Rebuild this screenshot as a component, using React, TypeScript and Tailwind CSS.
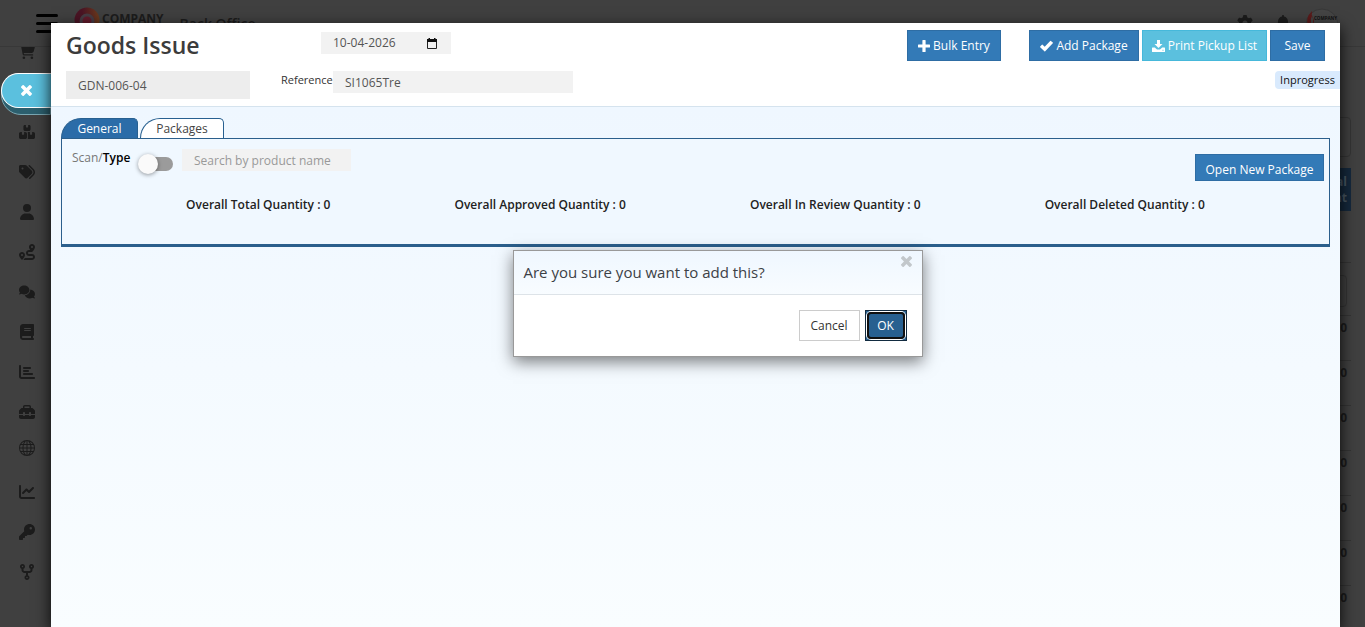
import React from "react";
import {
  FaCartShopping,
  FaBoxesStacked,
  FaTags,
  FaUser,
  FaRoute,
  FaComments,
  FaBook,
  FaChartBar,
  FaToolbox,
  FaChartLine,
  FaKey,
  FaCodeFork,
  FaGear,
  FaBell,
} from "react-icons/fa6";
import { BsGlobe } from "react-icons/bs";
import type { IconType } from "react-icons";

const navItems: { label: string; Icon: IconType }[] = [
  { label: "Sales", Icon: FaCartShopping },
  { label: "Orders", Icon: FaCartShopping },
  { label: "Inventory", Icon: FaBoxesStacked },
  { label: "Pricing", Icon: FaTags },
  { label: "Customers", Icon: FaUser },
  { label: "Routes", Icon: FaRoute },
  { label: "Messages", Icon: FaComments },
  { label: "Ledger", Icon: FaBook },
  { label: "Reports", Icon: FaChartBar },
  { label: "Tools", Icon: FaToolbox },
  { label: "Web", Icon: BsGlobe },
  { label: "Analytics", Icon: FaChartLine },
  { label: "Access", Icon: FaKey },
  { label: "Workflow", Icon: FaCodeFork },
];

const totals = [
  "Overall Total Quantity : 0",
  "Overall Approved Quantity : 0",
  "Overall In Review Quantity : 0",
  "Overall Deleted Quantity : 0",
];

const CrossIcon = ({ className }: { className: string }) => (
  <svg viewBox="110 366 1188 1188" className={className} fill="currentColor" aria-hidden="true">
    <path d="M1298 1322q0 40-28 68l-136 136q-28 28-68 28t-68-28l-294-294-294 294q-28 28-68 28t-68-28l-136-136q-28-28-28-68t28-68l294-294-294-294q-28-28-28-68t28-68l136-136q28-28 68-28t68 28l294 294 294-294q28-28 68-28t68 28l136 136q28 28 28 68t-28 68l-294 294 294 294q28 28 28 68z" />
  </svg>
);

const PlusIcon = () => (
  <svg viewBox="0 0 12 12" className="size-3" fill="currentColor" aria-hidden="true">
    <path d="M4.9 0h2.2q.5 0 .5.5v3.9h3.9q.5 0 .5.5v2.2q0 .5-.5.5H7.600v3.900q0 .5-.5.5H4.900q-.5 0-.5-.5V7.600H.5q-.5 0-.5-.5V4.900q0-.5.5-.5h3.900V.5q0-.5.5-.5z" />
  </svg>
);

const CheckIcon = () => (
  <svg viewBox="0 0 13 12" className="h-3 w-[13px]" fill="currentColor" aria-hidden="true">
    <path d="M.2 6.600 1.900 4.700q.3-.3.700 0L4.700 6.700 10.200 .9q.3-.3.700 0l1.900 1.600q.3.3 0 .7L5.200 11.300q-.4.4-.8 0L.2 7.300q-.3-.3 0-.7z" />
  </svg>
);

const DownloadIcon = () => (
  <svg viewBox="0 0 13 12" className="h-3 w-[13px]" fill="currentColor" aria-hidden="true">
    <path d="M5 0h3v4h2.500L6.500 8 2.500 4H5z" />
    <path fillRule="evenodd" d="M.5 7.500h2.300L5 9.500h3l2.200-2h2.300q.5 0 .5.5v3.500q0 .5-.5.5H.5q-.5 0-.5-.5V8q0-.5.5-.5zM10.500 9.800v.9h1v-.9z" />
  </svg>
);

function BackgroundPage() {
  return (
    <div className="flex h-screen flex-col overflow-hidden bg-[#404040] text-[#1c1c1c]" aria-hidden="true">
      <header className="flex h-[47px] shrink-0 items-start border-b border-[#383838] pl-9 pr-[26px]">
        <div className="mt-3.5 flex w-[22px] flex-col gap-[5px]">
          <span className="h-[3px] rounded bg-black" />
          <span className="h-[3px] rounded bg-black" />
          <span className="h-[3px] rounded bg-black" />
        </div>
        <svg viewBox="0 0 26 26" className="ml-4 mt-[7px] size-[26px]">
          <defs>
            <linearGradient id="ring" x1="0" x2="1">
              <stop offset="0.3" stopColor="#4a1424" />
              <stop offset="1" stopColor="#6b3a1c" />
            </linearGradient>
          </defs>
          <circle cx="13" cy="13" r="12.500" fill="url(#ring)" />
          <circle cx="13" cy="14" r="7.500" fill="#473c44" />
          <circle cx="13" cy="14" r="4.500" fill="#631c2c" />
        </svg>
        <span className="ml-0.5 mt-[13px] text-xs leading-3 font-bold">COMPANY</span>
        <span className="ml-4 mt-4 text-sm leading-4 font-semibold">Back Office</span>
        <div className="ml-auto mt-2 flex gap-[22px]">
          <FaGear className="mt-[7px] size-4" />
          <FaBell className="mt-[7px] size-4" />
          <svg viewBox="0 0 34 34" className="-ml-2 size-[34px]">
            <circle cx="17" cy="17" r="16" fill="#454545" stroke="#383838" />
            <path d="M3 17q-3-7 4-14-1 4 1 7t0 7z" fill="#5c1a1a" />
            <path d="M6 15q-1-4 1-7 2 3 1 7z" fill="#454545" />
            <text x="9" y="12" fontSize="4.500" fontWeight="700" fill="#111">COMPANY</text>
          </svg>
        </div>
      </header>
      <div className="flex min-h-0 flex-1">
        <nav className="-mt-[15px] flex w-[54px] flex-col [clip-path:inset(15px_0_0_0)]">
          {navItems.map(({ label, Icon }) => (
            <span key={label} className={label === "Web" ? "flex h-10 shrink-0 items-start justify-center pt-2" : "flex h-10 shrink-0 items-center justify-center"}>
              <Icon className="size-4" />
            </span>
          ))}
        </nav>
        <div className="flex flex-1 flex-col pr-3.5 pt-[70px]">
          <div className="h-10 shrink-0 rounded border border-[#353535]" />
          <div className="mt-[11px] flex h-[43px] shrink-0 flex-col items-end justify-center bg-[#15293d] pr-1 text-xs leading-4 font-bold text-[#4a5966]">
            <span>Total</span>
            <span>Count</span>
          </div>
          <div className="h-[52px] shrink-0 border-b border-[#353535]" />
          <div className="mt-3 mr-1 mb-2 h-8 shrink-0 rounded border border-[#353535]" />
          {[0, 1, 2, 3, 4, 5, 6].map((row) => (
            <div key={row} className="flex h-[45px] shrink-0 justify-end border-t border-[#353535] pr-1 pt-1 text-xs leading-4 font-bold">
              0
            </div>
          ))}
        </div>
      </div>
    </div>
  );
}

const blueButton =
  "flex h-[31px] items-center gap-[3px] border border-[#2e6da4] bg-[#337ab7] text-xs text-white";

function PanelHeader() {
  return (
    <header className="flex h-[84px] shrink-0 border-b border-[#d5e3ee] bg-white">
      <div className="w-[215px] shrink-0 pl-[15px] pt-1.5">
        <h1 className="text-[23px] leading-8 font-semibold text-[#3c3c3c]">Goods Issue</h1>
        <input aria-label="Issue number" readOnly defaultValue="GDN-006-04" className="mt-2.5 h-7 w-[184px] bg-[#ededed] px-3 text-xs text-[#555] outline-none" />
      </div>
      <div className="w-[310px] shrink-0 pl-[15px] pt-[9px]">
        <label className="ml-10 flex h-[22px] w-[130px] items-center justify-between bg-[#f2f2f2] pl-3 pr-3.5">
          <input aria-label="Issue date" defaultValue="10-04-2026" className="w-[72px] bg-transparent text-xs text-[#555] outline-none" />
          <svg viewBox="0 0 10 11" className="h-[11px] w-[10px]" aria-hidden="true">
            <path d="M.5 2v8.500h9V2z" fill="none" stroke="#222" />
            <path d="M0 1h10v3H0zM1.500 0h1.500v1H1.500zM7 0h1.500v1H7z" fill="#111" />
          </svg>
        </label>
        <div className="mt-[17px] flex">
          <label htmlFor="reference" className="w-[52px] shrink-0 text-[11px] leading-[18px] text-[#333]">Reference</label>
          <input id="reference" defaultValue="SI1065Tre" className="h-[22px] w-60 shrink-0 bg-[#f2f2f2] px-3 text-xs text-[#555] outline-none" />
        </div>
      </div>
      <div className="flex flex-1 flex-col items-end pt-[7px]">
        <div className="flex gap-[3px] pr-[15px]">
          <button type="button" className={`${blueButton} mr-[25px] w-[94px] justify-center`}><PlusIcon /> Bulk Entry</button>
          <button type="button" className={`${blueButton} w-[110px] justify-center`}><CheckIcon /> Add Package</button>
          <button type="button" className="flex h-[31px] w-[125px] items-center justify-center gap-[3px] border border-[#46b8da] bg-[#5bc0de] text-xs text-white"><DownloadIcon /> Print Pickup List</button>
          <button type="button" className={`${blueButton} w-[55px] justify-center`}>Save</button>
        </div>
        <span className="mt-2.5 flex h-[18px] w-[65px] items-center justify-center rounded-l bg-[#d9eafd] text-[11px] text-[#111]">Inprogress</span>
      </div>
    </header>
  );
}

function PanelBody() {
  return (
    <div className="flex-1 bg-linear-to-b from-[#eff7ff] to-[#f9fdff] px-2.5 pt-[11px]">
      <div role="tablist" className="flex gap-0.5">
        <button type="button" role="tab" aria-selected="true" className="h-5 w-[77px] rounded-tl-[20px] rounded-tr-[5px] border border-b-0 border-[#286090] bg-[#2b6ca8] text-xs text-white">General</button>
        <button type="button" role="tab" aria-selected="false" className="h-5 w-[84px] rounded-tl-[20px] rounded-tr-[5px] border border-b-0 border-[#286090] bg-white text-xs text-[#444]">Packages</button>
      </div>
      <section className="h-[109px] border border-b-[3px] border-[#2b5f8c] bg-[#f0f8ff]">
        <div className="flex pl-2.5 pr-[5px] pt-2.5">
          <label htmlFor="mode" className="mr-2 w-[58px] text-xs leading-[18px] text-[#777]">Scan/<b className="font-semibold text-black">Type</b></label>
          <input id="mode" type="checkbox" role="switch" className="peer sr-only" />
          <label htmlFor="mode" aria-label="Toggle scan or type" className="mt-2 flex h-3.5 w-[35px] items-center rounded-full bg-linear-to-r from-transparent from-20% to-[#9b9b9b] to-20%">
            <span className="size-5 shrink-0 rounded-full bg-[#fafafa] shadow-[0_1px_4px_rgba(0,0,0,0.4)]" />
          </label>
          <input aria-label="Product name" placeholder="Search by product name" className="ml-[9px] h-[22px] w-[169px] bg-[#f2f2f2] px-3 text-xs outline-none placeholder:text-[#999]" />
          <button type="button" className="ml-auto mt-[5px] h-[27px] w-[129px] border border-[#2e6da4] bg-[#337ab7] pt-1 text-xs text-white">Open New Package</button>
        </div>
        <div className="mt-4 flex justify-evenly text-xs leading-4 font-semibold text-[#222]">
          {totals.map((total) => (
            <span key={total}>{total}</span>
          ))}
        </div>
      </section>
    </div>
  );
}

function ConfirmDialog() {
  return (
    <div role="dialog" aria-labelledby="confirm-title" className="absolute top-[250px] left-1/2 w-[410px] -translate-x-[170px] border border-[#999] bg-white shadow-[0_5px_15px_rgba(0,0,0,0.5)]">
      <div className="flex h-11 items-center justify-between border-b border-[#dde3e8] bg-linear-to-b from-[#eff7ff] to-[#f8fcff] px-2.5">
        <h2 id="confirm-title" className="text-[15px] text-[#3c4146]">Are you sure you want to add this?</h2>
        <button type="button" aria-label="Close" className="mb-[22px] text-[#c2c7cb]"><CrossIcon className="size-[11px]" /></button>
      </div>
      <div className="flex justify-end gap-[5px] p-[15px]">
        <button type="button" className="h-[31px] w-[61px] border border-[#ccc] bg-white text-xs text-[#333]">Cancel</button>
        <button type="button" className="h-[31px] w-[42px] border border-[#122b40] bg-[#286090] p-px text-xs text-white">
          <span className="flex size-full items-center justify-center rounded-[4px] border-2 border-[#101010] ring-1 ring-white">OK</span>
        </button>
      </div>
    </div>
  );
}

export default function App() {
  return (
    <div className="relative h-screen overflow-hidden font-['Open_Sans','Noto_Sans',sans-serif]">
      <BackgroundPage />
      <div className="absolute inset-0 flex pt-[23px] pr-[25px]">
        <div className="flex w-[51px] shrink-0 flex-col pl-px pt-[50px]">
          <div className="h-[42px] rounded-l-[20px] border border-[#7aa7b3] bg-[#2c5f6e]">
            <button type="button" aria-label="Close panel" className="-mt-px -ml-px flex h-[35px] w-[50px] items-center justify-center rounded-l-[18px] border border-r-0 border-white bg-[#5bc0de] text-white">
              <CrossIcon className="size-[11px]" />
            </button>
          </div>
        </div>
        <main className="flex min-w-0 flex-1 flex-col shadow-[0_5px_15px_rgba(0,0,0,0.9)]">
          <PanelHeader />
          <PanelBody />
        </main>
      </div>
      <ConfirmDialog />
    </div>
  );
}
